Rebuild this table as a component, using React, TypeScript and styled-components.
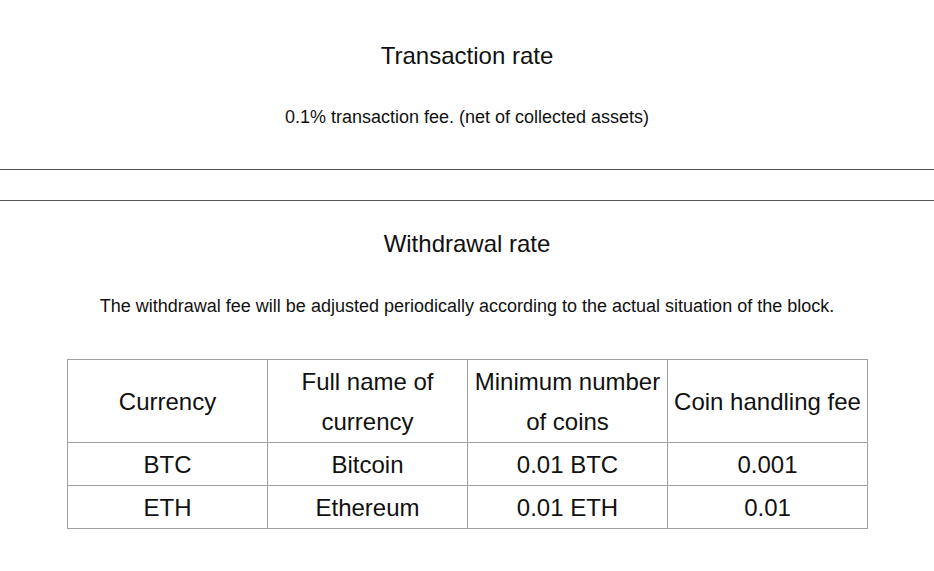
import React from "react";
import styled, { createGlobalStyle } from "styled-components";

const Global = createGlobalStyle`
  html, body { margin: 0; padding: 0; background: #fff; }
  body { font-family: "Liberation Sans", Arial, sans-serif; color: #111; }
`;

const Page = styled.div`
  padding-top: 42px;
  display: flex;
  flex-direction: column;
`;

const Title = styled.h2<{ $top?: number }>`
  margin: ${(p) => p.$top ?? 0}px 0 0;
  font-size: 24px;
  line-height: 28px;
  font-weight: normal;
  text-align: center;
`;

const Sub = styled.p<{ $top: number }>`
  margin: ${(p) => p.$top}px 0 0;
  font-size: 18px;
  line-height: 21px;
  text-align: center;
`;

const Divider = styled.hr<{ $top: number }>`
  margin: ${(p) => p.$top}px 0 0;
  border: 0;
  border-top: 1px solid #555;
  height: 0;
  width: 100%;
`;

const Table = styled.table`
  margin: 42px 0 0 67px;
  width: 801px;
  border-collapse: collapse;
  table-layout: fixed;
  font-size: 24px;
  line-height: 40px;
`;

const Cell = styled.td`
  border: 1px solid #a0a0a0;
  padding: 2px 1px 0;
  text-align: center;
  vertical-align: middle;
  font-weight: normal;
`;

const rows = [
  ["BTC", "Bitcoin", "0.01 BTC", "0.001"],
  ["ETH", "Ethereum", "0.01 ETH", "0.01"],
];

export default function App() {
  return (
    <>
      <Global />
      <Page>
        <Title>Transaction rate</Title>
        <Sub $top={37}>0.1% transaction fee. (net of collected assets)</Sub>
        <Divider $top={41} />
        <Divider $top={30} />
        <Title $top={29}>Withdrawal rate</Title>
        <Sub $top={38}>
          The withdrawal fee will be adjusted periodically according to the actual situation of the block.
        </Sub>
        <Table>
          <thead>
            <tr>
              <Cell as="th">Currency</Cell>
              <Cell as="th">Full name of currency</Cell>
              <Cell as="th">Minimum number of coins</Cell>
              <Cell as="th">Coin handling fee</Cell>
            </tr>
          </thead>
          <tbody>
            {rows.map((r) => (
              <tr key={r[0]}>
                {r.map((c, i) => (
                  <Cell key={i}>{c}</Cell>
                ))}
              </tr>
            ))}
          </tbody>
        </Table>
      </Page>
    </>
  );
}
